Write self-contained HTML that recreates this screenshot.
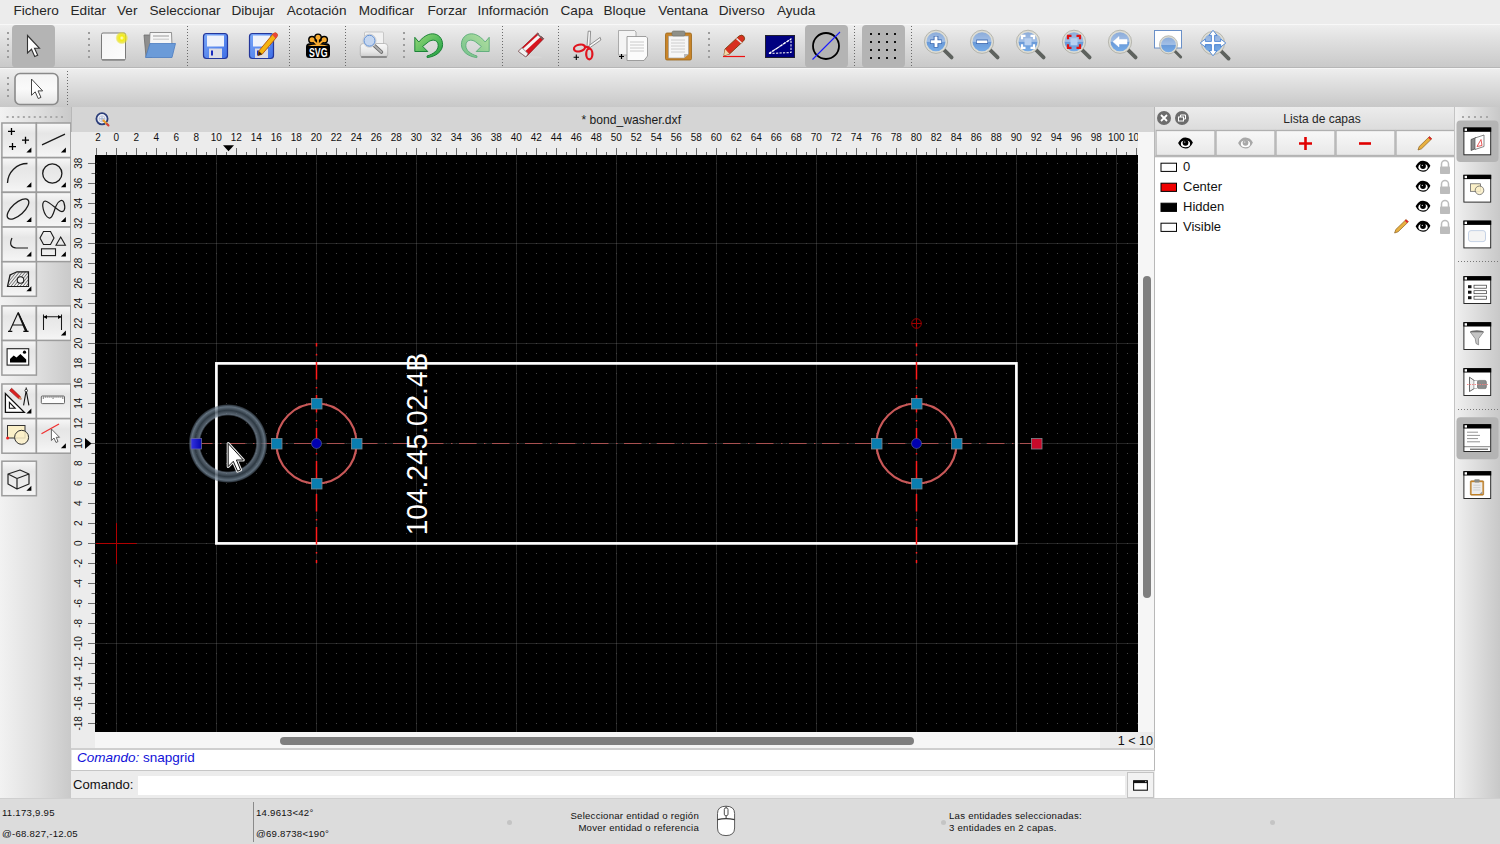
<!DOCTYPE html><html><head><meta charset="utf-8"><style>
*{margin:0;padding:0;box-sizing:border-box}
html,body{width:1500px;height:844px;overflow:hidden;background:#e8e8e8;font-family:"Liberation Sans",sans-serif;color:#000}
.a{position:absolute}
svg{position:absolute;overflow:visible}
#menubar{left:0;top:0;width:1500px;height:24px;background:#ececec}
#menubar span{position:absolute;top:3px;font-size:13.6px;color:#262626;line-height:16px}
#tb1{left:0;top:24px;width:1500px;height:44px;background:linear-gradient(#eeeeee,#e2e2e2 30%,#c9c9c9);border-top:1px solid #f8f8f8;border-bottom:1px solid #b6b6b6}
#tb2{left:0;top:68px;width:1500px;height:40px;background:linear-gradient(#eeeeee,#e0e0e0 35%,#c8c8c8);border-top:1px solid #f6f6f6;border-bottom:1px solid #b4b4b4}
#palette{left:0;top:107px;width:71px;height:691px;background:linear-gradient(90deg,#f2f2f2,#dedede 55%,#c9c9c9)}
#mdititle{left:71px;top:107px;width:1084px;height:25px;background:#d5d5d5}
#rulertop{left:71px;top:132px;width:1067px;height:23px;background:#ececec}
#rulerleft{left:71px;top:155px;width:24px;height:593px;background:#ececec}
#canvas{left:95px;top:155px;width:1043px;height:577px;background:#000;overflow:hidden}
#vscroll{left:1138px;top:132px;width:16px;height:616px;background:#f6f6f6}
#hscroll{left:95px;top:732px;width:1059px;height:16px;background:#f6f6f6}
#cmdhist{left:71px;top:748px;width:1084px;height:23px;background:#fff;border-top:2px solid #d0d0d0;border-bottom:1px solid #c8c8c8}
#cmdrow{left:71px;top:771px;width:1084px;height:27px;background:#ececec}
#status{left:0;top:798px;width:1500px;height:46px;background:#dcdcdc}
#dock{left:1155px;top:107px;width:300px;height:691px;background:#fff}
#rtb{left:1455px;top:107px;width:45px;height:691px;background:linear-gradient(90deg,#f0f0f0,#dadada 55%,#c8c8c8)}
.pb{position:absolute;width:36px;height:36px;border:2px solid #a2a2a2;background:linear-gradient(#f6f6f6,#e6e6e6 30%,#ececec 60%,#f4f4f4)}
.sep{position:absolute;width:1px;border-left:2px dotted #8a8a8a}
</style></head><body>
<div id="menubar" class="a"><span style="left:13.5px">Fichero</span><span style="left:70.5px">Editar</span><span style="left:117px">Ver</span><span style="left:149.5px">Seleccionar</span><span style="left:231.5px">Dibujar</span><span style="left:286.8px">Acotación</span><span style="left:358.8px">Modificar</span><span style="left:427.5px">Forzar</span><span style="left:477.5px">Información</span><span style="left:560.5px">Capa</span><span style="left:603.5px">Bloque</span><span style="left:658.2px">Ventana</span><span style="left:718.8px">Diverso</span><span style="left:777px">Ayuda</span></div>
<div id="tb1" class="a"></div><div id="tb2" class="a"></div>
<svg class="a" style="left:0;top:0" width="1500" height="110" viewBox="0 0 1500 110">
<defs>
<radialGradient id="glow" cx="50%" cy="50%" r="50%"><stop offset="0" stop-color="#ffffe8"/><stop offset="0.35" stop-color="#f4ee10"/><stop offset="0.75" stop-color="#e8e020" stop-opacity="0.7"/><stop offset="1" stop-color="#e8e020" stop-opacity="0"/></radialGradient>
<linearGradient id="paper" x1="0" y1="0" x2="1" y2="1"><stop offset="0" stop-color="#f4f4f4"/><stop offset="1" stop-color="#fdfdfd"/></linearGradient>
<linearGradient id="lens" x1="0" y1="0" x2="0" y2="1"><stop offset="0" stop-color="#8aaad8"/><stop offset="0.48" stop-color="#a2bfe6"/><stop offset="0.52" stop-color="#6a9ad8"/><stop offset="1" stop-color="#78aeea"/></linearGradient>
<linearGradient id="grn" x1="0" y1="0" x2="0" y2="1"><stop offset="0" stop-color="#6fd06a"/><stop offset="1" stop-color="#1e9a36"/></linearGradient>
<linearGradient id="flop" x1="0" y1="0" x2="1" y2="1"><stop offset="0" stop-color="#7aa8f8"/><stop offset="1" stop-color="#3e6ee6"/></linearGradient>
</defs>
<rect x="12" y="25" width="43" height="42.5" rx="4" fill="#b4b4b4"/>
<rect x="805" y="25" width="43" height="42.5" rx="4" fill="#b4b4b4"/>
<rect x="862" y="25" width="43" height="42.5" rx="4" fill="#b4b4b4"/>
<rect x="7" y="32" width="2" height="2" fill="#9c9c9c"/><rect x="7" y="38" width="2" height="2" fill="#9c9c9c"/><rect x="7" y="44" width="2" height="2" fill="#9c9c9c"/><rect x="7" y="50" width="2" height="2" fill="#9c9c9c"/><rect x="7" y="56" width="2" height="2" fill="#9c9c9c"/>
<rect x="88" y="32" width="2" height="2" fill="#9c9c9c"/><rect x="88" y="38" width="2" height="2" fill="#9c9c9c"/><rect x="88" y="44" width="2" height="2" fill="#9c9c9c"/><rect x="88" y="50" width="2" height="2" fill="#9c9c9c"/><rect x="88" y="56" width="2" height="2" fill="#9c9c9c"/>
<rect x="403" y="32" width="2" height="2" fill="#9c9c9c"/><rect x="403" y="38" width="2" height="2" fill="#9c9c9c"/><rect x="403" y="44" width="2" height="2" fill="#9c9c9c"/><rect x="403" y="50" width="2" height="2" fill="#9c9c9c"/><rect x="403" y="56" width="2" height="2" fill="#9c9c9c"/>
<rect x="708" y="32" width="2" height="2" fill="#9c9c9c"/><rect x="708" y="38" width="2" height="2" fill="#9c9c9c"/><rect x="708" y="44" width="2" height="2" fill="#9c9c9c"/><rect x="708" y="50" width="2" height="2" fill="#9c9c9c"/><rect x="708" y="56" width="2" height="2" fill="#9c9c9c"/>
<line x1="187.5" y1="26" x2="187.5" y2="67" stroke="#6a6a6a" stroke-width="1" stroke-dasharray="1 2"/>
<line x1="289.5" y1="26" x2="289.5" y2="67" stroke="#6a6a6a" stroke-width="1" stroke-dasharray="1 2"/>
<line x1="345.5" y1="26" x2="345.5" y2="67" stroke="#6a6a6a" stroke-width="1" stroke-dasharray="1 2"/>
<line x1="502.5" y1="26" x2="502.5" y2="67" stroke="#6a6a6a" stroke-width="1" stroke-dasharray="1 2"/>
<line x1="558.5" y1="26" x2="558.5" y2="67" stroke="#6a6a6a" stroke-width="1" stroke-dasharray="1 2"/>
<line x1="854.5" y1="26" x2="854.5" y2="67" stroke="#6a6a6a" stroke-width="1" stroke-dasharray="1 2"/>
<line x1="911.5" y1="26" x2="911.5" y2="67" stroke="#6a6a6a" stroke-width="1" stroke-dasharray="1 2"/>
<path d="M27.50,35.50 L27.50,53.00 L31.50,49.30 L34.70,56.50 L37.70,55.30 L34.50,48.30 L39.50,48.30Z" fill="#fff" stroke="#333" stroke-width="1.1" stroke-linejoin="miter"/>
<rect x="101.5" y="33" width="24" height="27" rx="1.5" fill="url(#paper)" stroke="#7a7a7a" stroke-width="1"/>
<rect x="102" y="59" width="23" height="1.5" fill="#8a8a8a"/>
<circle cx="121.8" cy="38" r="6.5" fill="url(#glow)"/>
<path d="M144,35 L152,35 L152,57 L146,57 Z" fill="#8e8e8e" stroke="#6c6c6c" stroke-width="0.8"/>
<path d="M150,32.5 L171.5,32.5 L172,46 L149,57 Z" fill="#f6f6f6" stroke="#7a7a7a" stroke-width="0.8"/>
<rect x="153" y="35" width="16" height="2" fill="#c8c8c8"/><rect x="153" y="38.5" width="16" height="1.5" fill="#d4d4d4"/>
<path d="M150,43.5 L175.5,43.5 L172,57.5 L145.5,57.5 Z" fill="#6b9bd8" stroke="#4b7cc0" stroke-width="0.8"/>
<rect x="203.5" y="33.5" width="24" height="25" rx="3" fill="url(#flop)" stroke="#23369a" stroke-width="1.2"/><rect x="207" y="35.5" width="17" height="11" fill="#eef2fb"/><rect x="209" y="48.5" width="13" height="9.5" fill="#dcdce4"/><rect x="211" y="50.5" width="2" height="5" fill="#1a2cc0"/>
<rect x="249.5" y="33.5" width="24" height="25" rx="3" fill="url(#flop)" stroke="#23369a" stroke-width="1.2"/><rect x="253" y="35.5" width="17" height="11" fill="#eef2fb"/><rect x="255" y="48.5" width="13" height="9.5" fill="#dcdce4"/><rect x="257" y="50.5" width="2" height="5" fill="#1a2cc0"/>
<path d="M258.8,51 L273.3,33.6 Q275.5,32 277,33.6 Q278.3,35.5 276.6,37.3 L262.2,54.2 L258.2,55.5 Z" fill="#f4b410" stroke="#b8520c" stroke-width="0.9"/>
<path d="M272.3,34.8 L273.3,33.6 Q275.5,32 277,33.6 Q278.3,35.5 276.6,37.3 L275.6,38.4 Z" fill="#e8463a"/>
<path d="M258.8,51 L262.2,54.2 L258.2,55.5 Z" fill="#3a2a10"/>
<rect x="306" y="43.3" width="24" height="14.7" rx="3.5" fill="#000"/>
<line x1="318" y1="45" x2="312" y2="39.7" stroke="#000" stroke-width="4.2" stroke-linecap="round"/><circle cx="312" cy="39.7" r="3.9" fill="#000"/>
<line x1="318" y1="45" x2="318" y2="37.3" stroke="#000" stroke-width="4.2" stroke-linecap="round"/><circle cx="318" cy="37.3" r="3.9" fill="#000"/>
<line x1="318" y1="45" x2="324.2" y2="39.7" stroke="#000" stroke-width="4.2" stroke-linecap="round"/><circle cx="324.2" cy="39.7" r="3.9" fill="#000"/>
<line x1="318" y1="45" x2="312" y2="39.7" stroke="#f8ac30" stroke-width="1.8"/><circle cx="312" cy="39.7" r="2.5" fill="#f8ac30"/>
<line x1="318" y1="45" x2="318" y2="37.3" stroke="#f8ac30" stroke-width="1.8"/><circle cx="318" cy="37.3" r="2.5" fill="#f8ac30"/>
<line x1="318" y1="45" x2="324.2" y2="39.7" stroke="#f8ac30" stroke-width="1.8"/><circle cx="324.2" cy="39.7" r="2.5" fill="#f8ac30"/>
<path d="M307.8,46 Q312,44 318,44.5 Q324,44 328.4,46 Z" fill="#f8ac30"/>
<text x="318.2" y="57" text-anchor="middle" font-family="Liberation Sans" font-weight="bold" font-size="13.5" fill="#fff" textLength="18.5" lengthAdjust="spacingAndGlyphs">SVG</text>
<defs><linearGradient id="prn" x1="0" y1="0" x2="0" y2="1"><stop offset="0" stop-color="#fafafa"/><stop offset="0.6" stop-color="#e6e6e6"/><stop offset="1" stop-color="#c8c8c8"/></linearGradient></defs>
<rect x="364.5" y="32" width="19" height="13.5" rx="1" fill="#f2f2f2" stroke="#b8b8b8" stroke-width="0.7"/>
<rect x="360.3" y="43.5" width="27.4" height="14" rx="3" fill="url(#prn)" stroke="#a8a8a8" stroke-width="0.7"/>
<rect x="361" y="56" width="26" height="2" rx="1" fill="#8a8a8a"/>
<line x1="374.4" y1="45.7" x2="381.4" y2="52" stroke="#6a6a6a" stroke-width="3.6" stroke-linecap="round"/>
<line x1="374.4" y1="45.7" x2="381.4" y2="52" stroke="#b0b0b0" stroke-width="1.8" stroke-linecap="round"/>
<circle cx="369.5" cy="40.7" r="6.6" fill="#f6f6f6" stroke="#c8c8c8" stroke-width="0.8"/>
<circle cx="369.5" cy="40.7" r="5.5" fill="#c4d6f0" stroke="#5a8ad0" stroke-width="1"/>
<defs><linearGradient id="grn2" x1="0" y1="0" x2="1" y2="1"><stop offset="0" stop-color="#9ad878"/><stop offset="0.6" stop-color="#4cb85a"/><stop offset="1" stop-color="#1e9a3a"/></linearGradient><linearGradient id="grn3" x1="1" y1="0" x2="0" y2="1"><stop offset="0" stop-color="#b4e0a0"/><stop offset="1" stop-color="#72c08a"/></linearGradient></defs>
<path d="M414.8,37.3 L418.8,42 C422.5,37.5 427.5,33.8 432.5,33.8 C438.5,33.8 442.6,38.5 442.6,44.5 C442.6,51.5 436,56.5 427.2,57.6 L427,56 C433.5,54 438.2,50.5 438.2,45.5 C438.2,42 436,40.2 433.5,40.2 C431.5,40.2 430,40.8 428.5,41.8 L422.7,46.4 L427.8,51.5 L414.8,51.5 Z" fill="url(#grn2)" stroke="#0e7a2c" stroke-width="0.9" stroke-linejoin="round"/>
<path d="M 489.2,37.3 L 485.2,42 C 481.5,37.5 476.5,33.8 471.5,33.8 C 465.5,33.8 461.4,38.5 461.4,44.5 C 461.4,51.5 468.0,56.5 476.8,57.6 L 477.0,56 C 470.5,54 465.8,50.5 465.8,45.5 C 465.8,42 468.0,40.2 470.5,40.2 C 472.5,40.2 474.0,40.8 475.5,41.8 L 481.3,46.4 L 476.2,51.5 L 489.2,51.5 Z" fill="url(#grn3)" stroke="#5aaa78" stroke-width="0.9" stroke-linejoin="round"/>
<ellipse cx="531" cy="57.2" rx="11" ry="1.5" fill="#d6d6d6"/>
<path d="M518.3,51.3 L537.7,33 L543.7,38.7 L526,57 Z" fill="#d8141e" stroke="#8a1016" stroke-width="0.7" stroke-linejoin="round"/>
<path d="M522.5,49.3 L539.5,33.8 L541.6,36 L524.6,51.7 Z" fill="#f4f4f4"/>
<path d="M537.7,33 L543.7,38.7 L542.6,39.8 L536.6,34.1 Z" fill="#6a6a6a"/>
<path d="M518.3,51.3 L522,47.8 L528,53.6 L526,57 Z" fill="#f2f2f2" stroke="#7a7a7a" stroke-width="0.7"/>
<path d="M587,46.5 L588.2,31.2 L590.6,31.2 L589.8,46.5 Z" fill="#f6f6f6" stroke="#6a6a6a" stroke-width="0.7"/>
<path d="M588.6,45.8 L600.2,37.4 L600.9,40 L590,47.6 Z" fill="#f6f6f6" stroke="#6a6a6a" stroke-width="0.7"/>
<ellipse cx="579.5" cy="48" rx="5.6" ry="3.3" transform="rotate(-12 579.5 48)" fill="none" stroke="#e0141e" stroke-width="2.2"/>
<ellipse cx="589.3" cy="54" rx="3.1" ry="5.3" fill="none" stroke="#e0141e" stroke-width="2.2"/>
<path d="M584.6,46.6 L588.5,47.4 L589.3,49" stroke="#e0141e" stroke-width="2.2" fill="none"/>
<path d="M573.6,57.3 h5.4 M576.3,54.6 v5.4" stroke="#000" stroke-width="1.1"/>
<path d="M618.5,30.5 L634.5,30.5 L636,32 L636,55 L618.5,55 Z" fill="#f4f4f4" stroke="#9a9a9a" stroke-width="0.8"/>
<path d="M627,36.5 L646,36.5 L647.5,38 L647.5,56 L644,60.5 L627,60.5 Z" fill="#fbfbfb" stroke="#8a8a8a" stroke-width="0.8"/>
<line x1="630" y1="42" x2="644" y2="42" stroke="#c4c4c4" stroke-width="0.9"/>
<line x1="630" y1="45" x2="644" y2="45" stroke="#c4c4c4" stroke-width="0.9"/>
<line x1="630" y1="48" x2="644" y2="48" stroke="#c4c4c4" stroke-width="0.9"/>
<line x1="630" y1="51" x2="644" y2="51" stroke="#c4c4c4" stroke-width="0.9"/>
<path d="M619,56.5 h5 M621.5,54 v5" stroke="#000" stroke-width="1.2"/>
<rect x="665.5" y="33" width="26" height="27" rx="1.5" fill="#c88428" stroke="#9a6416" stroke-width="0.8"/>
<path d="M668.5,36 L688.5,36 L688.5,54 L684,58 L668.5,58 Z" fill="#f6f6f6" stroke="#9a9a9a" stroke-width="0.6"/>
<path d="M684,58 L688.5,54 L684,54 Z" fill="#b8b8b8"/>
<rect x="672" y="31" width="13" height="5" rx="1.5" fill="#8f9088" stroke="#6f706a" stroke-width="0.6"/>
<line x1="671" y1="40" x2="685" y2="40" stroke="#c8c8c8" stroke-width="0.9"/>
<line x1="671" y1="43" x2="685" y2="43" stroke="#c8c8c8" stroke-width="0.9"/>
<line x1="671" y1="46" x2="685" y2="46" stroke="#c8c8c8" stroke-width="0.9"/>
<line x1="671" y1="49" x2="685" y2="49" stroke="#c8c8c8" stroke-width="0.9"/>
<line x1="671" y1="52" x2="685" y2="52" stroke="#c8c8c8" stroke-width="0.9"/>
<line x1="723" y1="56.5" x2="745" y2="56.5" stroke="#ee1010" stroke-width="1.2"/>
<path d="M725,49 L739,36 Q742,34 744,36.5 Q745.5,39 743.5,41 L729.5,54 L724,55.5 Z" fill="#d83020" stroke="#7a4010" stroke-width="0.9"/>
<path d="M725,49 L729.5,54 L724,55.5 Z" fill="#f0d8a8"/>
<path d="M736.5,38.5 L741.5,43" stroke="#e8e8e8" stroke-width="1.6"/>
<rect x="765.5" y="35.5" width="29" height="22" fill="#000080" stroke="#202030" stroke-width="1"/>
<path d="M769,53.5 L791,52.5 L791,39 Z" fill="none" stroke="#e8e8f0" stroke-width="1.1" stroke-dasharray="2.2 1.3"/>
<path d="M769,53.5 L791,39" stroke="#ffffff" stroke-width="1.2" stroke-dasharray="3 1.2"/>
<circle cx="826" cy="46" r="13" fill="none" stroke="#000" stroke-width="1.8"/>
<line x1="812.5" y1="59.5" x2="840" y2="32" stroke="#1a1aff" stroke-width="1.1"/>
<rect x="870" y="33" width="2" height="2" fill="#111"/>
<rect x="870" y="41" width="2" height="2" fill="#111"/>
<rect x="870" y="49" width="2" height="2" fill="#111"/>
<rect x="870" y="57" width="2" height="2" fill="#111"/>
<rect x="878" y="33" width="2" height="2" fill="#111"/>
<rect x="878" y="41" width="2" height="2" fill="#111"/>
<rect x="878" y="49" width="2" height="2" fill="#111"/>
<rect x="878" y="57" width="2" height="2" fill="#111"/>
<rect x="886" y="33" width="2" height="2" fill="#111"/>
<rect x="886" y="41" width="2" height="2" fill="#111"/>
<rect x="886" y="49" width="2" height="2" fill="#111"/>
<rect x="886" y="57" width="2" height="2" fill="#111"/>
<rect x="894" y="33" width="2" height="2" fill="#111"/>
<rect x="894" y="41" width="2" height="2" fill="#111"/>
<rect x="894" y="49" width="2" height="2" fill="#111"/>
<rect x="894" y="57" width="2" height="2" fill="#111"/>
<line x1="944.0" y1="49.8" x2="951.6" y2="57.4" stroke="#5e625e" stroke-width="3.80" stroke-linecap="round"/><circle cx="936" cy="41.8" r="10.5" fill="url(#lens)" stroke="#dcdcd4" stroke-width="2.00"/><circle cx="936" cy="41.8" r="11.60" fill="none" stroke="#9a9a90" stroke-width="0.6"/><path d="M930.2,41.8 h11.6 M936,36 v11.6" stroke="#2a5aa8" stroke-width="4.6"/><path d="M930.7,41.8 h10.6 M936,36.5 v10.6" stroke="#fff" stroke-width="3"/>
<line x1="990.0" y1="49.8" x2="997.6" y2="57.4" stroke="#5e625e" stroke-width="3.80" stroke-linecap="round"/><circle cx="982" cy="41.8" r="10.5" fill="url(#lens)" stroke="#dcdcd4" stroke-width="2.00"/><circle cx="982" cy="41.8" r="11.60" fill="none" stroke="#9a9a90" stroke-width="0.6"/><path d="M976.3,41.8 h11.6" stroke="#2a5aa8" stroke-width="4.4"/><path d="M976.8,41.8 h10.6" stroke="#fff" stroke-width="2.8"/>
<line x1="1036.0" y1="49.8" x2="1043.6" y2="57.4" stroke="#5e625e" stroke-width="3.80" stroke-linecap="round"/><circle cx="1028" cy="41.8" r="10.5" fill="url(#lens)" stroke="#dcdcd4" stroke-width="2.00"/><circle cx="1028" cy="41.8" r="11.60" fill="none" stroke="#9a9a90" stroke-width="0.6"/><rect x="1024.5" y="38.3" width="7" height="7" fill="#b8d0f0"/><path d="M1022,39.3 v-3.5 h3.5 M1030.5,35.8 h3.5 v3.5 M1034,44.3 v3.5 h-3.5 M1025.5,47.8 h-3.5 v-3.5" fill="none" stroke="#fff" stroke-width="2.2"/>
<line x1="1082.0" y1="49.8" x2="1089.6" y2="57.4" stroke="#5e625e" stroke-width="3.80" stroke-linecap="round"/><circle cx="1074" cy="41.8" r="10.5" fill="url(#lens)" stroke="#dcdcd4" stroke-width="2.00"/><circle cx="1074" cy="41.8" r="11.60" fill="none" stroke="#9a9a90" stroke-width="0.6"/><rect x="1070.5" y="38.3" width="7" height="7" fill="#b8d0f0"/><path d="M1068,39.3 v-3.5 h3.5 M1076.5,35.8 h3.5 v3.5 M1080,44.3 v3.5 h-3.5 M1071.5,47.8 h-3.5 v-3.5" fill="none" stroke="#e01010" stroke-width="2.2"/>
<line x1="1128.0" y1="49.8" x2="1135.6" y2="57.4" stroke="#5e625e" stroke-width="3.80" stroke-linecap="round"/><circle cx="1120" cy="41.8" r="10.5" fill="url(#lens)" stroke="#dcdcd4" stroke-width="2.00"/><circle cx="1120" cy="41.8" r="11.60" fill="none" stroke="#9a9a90" stroke-width="0.6"/><path d="M1113,41.8 L1119,36.5 L1119,39.5 L1127,39.5 L1127,44 L1119,44 L1119,47 Z" fill="#fff" stroke="#fff" stroke-width="0.5"/>
<rect x="1154.5" y="30.5" width="27" height="17.5" fill="#fff" stroke="#6a90c8" stroke-width="1"/>
<line x1="1174.747619047619" y1="51.047619047619044" x2="1180.682857142857" y2="56.98285714285714" stroke="#5e625e" stroke-width="2.97" stroke-linecap="round"/><circle cx="1168.5" cy="44.8" r="8.2" fill="url(#lens)" stroke="#dcdcd4" stroke-width="1.56"/><circle cx="1168.5" cy="44.8" r="9.06" fill="none" stroke="#9a9a90" stroke-width="0.6"/>
<line x1="1221.0" y1="51.0" x2="1228.6" y2="58.6" stroke="#5e625e" stroke-width="3.80" stroke-linecap="round"/><circle cx="1213" cy="43" r="10.5" fill="url(#lens)" stroke="#dcdcd4" stroke-width="2.00"/><circle cx="1213" cy="43" r="11.60" fill="none" stroke="#9a9a90" stroke-width="0.6"/><path d="M1213,30.3 L1217,35.3 L1214.6,35.3 L1214.6,41.4 L1220.7,41.4 L1220.7,39 L1225.8,43 L1220.7,47 L1220.7,44.6 L1214.6,44.6 L1214.6,50.7 L1217,50.7 L1213,55.8 L1209,50.7 L1211.4,50.7 L1211.4,44.6 L1205.3,44.6 L1205.3,47 L1200.2,43 L1205.3,39 L1205.3,41.4 L1211.4,41.4 L1211.4,35.3 L1209,35.3 Z" fill="#fff" stroke="#3a78d0" stroke-width="0.8" stroke-linejoin="round"/>
<rect x="7" y="77" width="2" height="2" fill="#9c9c9c"/><rect x="7" y="83" width="2" height="2" fill="#9c9c9c"/><rect x="7" y="89" width="2" height="2" fill="#9c9c9c"/><rect x="7" y="95" width="2" height="2" fill="#9c9c9c"/>
<defs><linearGradient id="btn2" x1="0" y1="0" x2="0" y2="1"><stop offset="0" stop-color="#f4f4f4"/><stop offset="0.5" stop-color="#fafafa"/><stop offset="1" stop-color="#e4e4e4"/></linearGradient></defs>
<rect x="15" y="73.5" width="43" height="31" rx="5" fill="url(#btn2)" stroke="#8a8a8a" stroke-width="1.6"/>
<path d="M31.50,79.00 L31.50,95.28 L35.22,91.83 L38.20,98.53 L40.99,97.41 L38.01,90.90 L42.66,90.90Z" fill="#fff" stroke="#444" stroke-width="1.0" stroke-linejoin="miter"/>
<line x1="67.5" y1="71" x2="67.5" y2="105" stroke="#6a6a6a" stroke-width="1" stroke-dasharray="1 2"/>
</svg>
<div id="palette" class="a"></div>
<svg class="a" style="left:0;top:0" width="72" height="800" viewBox="0 0 72 800">
<defs><linearGradient id="pbg" x1="0" y1="0" x2="0" y2="1"><stop offset="0" stop-color="#f8f8f8"/><stop offset="0.3" stop-color="#e6e6e6"/><stop offset="0.65" stop-color="#ececec"/><stop offset="1" stop-color="#f6f6f6"/></linearGradient></defs>
<rect x="6.5" y="116" width="2" height="2" fill="#a8a8a8"/>
<rect x="11.95" y="116" width="2" height="2" fill="#a8a8a8"/>
<rect x="17.4" y="116" width="2" height="2" fill="#a8a8a8"/>
<rect x="22.85" y="116" width="2" height="2" fill="#a8a8a8"/>
<rect x="28.3" y="116" width="2" height="2" fill="#a8a8a8"/>
<rect x="33.75" y="116" width="2" height="2" fill="#a8a8a8"/>
<rect x="39.2" y="116" width="2" height="2" fill="#a8a8a8"/>
<rect x="44.65" y="116" width="2" height="2" fill="#a8a8a8"/>
<rect x="50.1" y="116" width="2" height="2" fill="#a8a8a8"/>
<rect x="55.550000000000004" y="116" width="2" height="2" fill="#a8a8a8"/>
<rect x="61.0" y="116" width="2" height="2" fill="#a8a8a8"/>
<rect x="1.9" y="123" width="34.5" height="34.5" fill="url(#pbg)" stroke="#9c9c9c" stroke-width="1.5"/>
<rect x="36.4" y="123" width="34.5" height="34.5" fill="url(#pbg)" stroke="#9c9c9c" stroke-width="1.5"/>
<rect x="1.9" y="157.7" width="34.5" height="34.5" fill="url(#pbg)" stroke="#9c9c9c" stroke-width="1.5"/>
<rect x="36.4" y="157.7" width="34.5" height="34.5" fill="url(#pbg)" stroke="#9c9c9c" stroke-width="1.5"/>
<rect x="1.9" y="192.4" width="34.5" height="34.5" fill="url(#pbg)" stroke="#9c9c9c" stroke-width="1.5"/>
<rect x="36.4" y="192.4" width="34.5" height="34.5" fill="url(#pbg)" stroke="#9c9c9c" stroke-width="1.5"/>
<rect x="1.9" y="227.1" width="34.5" height="34.5" fill="url(#pbg)" stroke="#9c9c9c" stroke-width="1.5"/>
<rect x="36.4" y="227.1" width="34.5" height="34.5" fill="url(#pbg)" stroke="#9c9c9c" stroke-width="1.5"/>
<rect x="1.9" y="261.8" width="34.5" height="34.5" fill="url(#pbg)" stroke="#9c9c9c" stroke-width="1.5"/>
<rect x="1.9" y="305.9" width="34.5" height="34.5" fill="url(#pbg)" stroke="#9c9c9c" stroke-width="1.5"/>
<rect x="1.9" y="340.6" width="34.5" height="34.5" fill="url(#pbg)" stroke="#9c9c9c" stroke-width="1.5"/>
<rect x="36.4" y="305.9" width="34.5" height="34.5" fill="url(#pbg)" stroke="#9c9c9c" stroke-width="1.5"/>
<rect x="1.9" y="384" width="34.5" height="34.5" fill="url(#pbg)" stroke="#9c9c9c" stroke-width="1.5"/>
<rect x="36.4" y="384" width="34.5" height="34.5" fill="url(#pbg)" stroke="#9c9c9c" stroke-width="1.5"/>
<rect x="1.9" y="418.7" width="34.5" height="34.5" fill="url(#pbg)" stroke="#9c9c9c" stroke-width="1.5"/>
<rect x="36.4" y="418.7" width="34.5" height="34.5" fill="url(#pbg)" stroke="#9c9c9c" stroke-width="1.5"/>
<rect x="1.9" y="461.2" width="34.5" height="34.5" fill="url(#pbg)" stroke="#9c9c9c" stroke-width="1.5"/>
<path d="M8,131.4 h7 M11.5,128 v7 M22,140.2 h7 M25.5,136.7 v7 M9,146.6 h7 M12.5,143.1 v7" stroke="#000" stroke-width="1.3"/>
<path d="M26.4,152.5 L31.4,152.5 L31.4,147.5 Z" fill="#000"/>
<line x1="42" y1="144.8" x2="65" y2="134.2" stroke="#1a1a1a" fill="none" stroke-width="1.3"/>
<path d="M60.9,152.5 L65.9,152.5 L65.9,147.5 Z" fill="#000"/>
<path d="M7.5,183 A20,20 0 0 1 27.5,163.5" stroke="#1a1a1a" fill="none" stroke-width="1.3"/>
<path d="M26.4,187.2 L31.4,187.2 L31.4,182.2 Z" fill="#000"/>
<circle cx="52.3" cy="173.5" r="9.6" stroke="#1a1a1a" fill="none" stroke-width="1.3"/>
<path d="M60.9,187.2 L65.9,187.2 L65.9,182.2 Z" fill="#000"/>
<ellipse cx="18" cy="209" rx="13.5" ry="6" transform="rotate(-42 18 209)" stroke="#1a1a1a" fill="none" stroke-width="1.3"/>
<path d="M26.4,221.9 L31.4,221.9 L31.4,216.9 Z" fill="#000"/>
<path d="M45,201 C40,202 44,216 49,218 C53,219 54,210 56,206 C58,201 63,198 64,203 C66,209 64,213 60,211 C56,209 50,202 45,201 Z" stroke="#1a1a1a" fill="none" stroke-width="1.2"/>
<path d="M60.9,221.9 L65.9,221.9 L65.9,216.9 Z" fill="#000"/>
<path d="M12,238 Q8,247 16,248 L28,248" stroke="#1a1a1a" fill="none" stroke-width="1.2"/>
<path d="M26.4,256.6 L31.4,256.6 L31.4,251.6 Z" fill="#000"/>
<path d="M43.5,231.5 L50.5,231.5 L54,238 L50.5,244.5 L43.5,244.5 L40,238 Z" stroke="#1a1a1a" fill="none" stroke-width="1.1"/>
<path d="M56,245.3 L65.4,245.3 L60.7,237 Z" stroke="#1a1a1a" fill="none" stroke-width="1.1"/>
<rect x="41.5" y="248.8" width="14" height="6.8" stroke="#1a1a1a" fill="none" stroke-width="1.1"/>
<path d="M60.9,256.6 L65.9,256.6 L65.9,251.6 Z" fill="#000"/>
<clipPath id="hc"><path d="M7.5,286.5 L10,275 L17,271.8 L28.5,271.8 L28.5,286.5 Z"/></clipPath>
<g clip-path="url(#hc)"><line x1="-4" y1="290" x2="12" y2="270" stroke="#555" stroke-width="0.8"/><line x1="-1" y1="290" x2="15" y2="270" stroke="#555" stroke-width="0.8"/><line x1="2" y1="290" x2="18" y2="270" stroke="#555" stroke-width="0.8"/><line x1="5" y1="290" x2="21" y2="270" stroke="#555" stroke-width="0.8"/><line x1="8" y1="290" x2="24" y2="270" stroke="#555" stroke-width="0.8"/><line x1="11" y1="290" x2="27" y2="270" stroke="#555" stroke-width="0.8"/><line x1="14" y1="290" x2="30" y2="270" stroke="#555" stroke-width="0.8"/><line x1="17" y1="290" x2="33" y2="270" stroke="#555" stroke-width="0.8"/><line x1="20" y1="290" x2="36" y2="270" stroke="#555" stroke-width="0.8"/><line x1="23" y1="290" x2="39" y2="270" stroke="#555" stroke-width="0.8"/><line x1="26" y1="290" x2="42" y2="270" stroke="#555" stroke-width="0.8"/><line x1="29" y1="290" x2="45" y2="270" stroke="#555" stroke-width="0.8"/></g>
<path d="M7.5,286.5 L10,275 L17,271.8 L28.5,271.8 L28.5,286.5 Z" stroke="#1a1a1a" fill="none" stroke-width="1.2"/>
<circle cx="20.5" cy="280" r="3.3" fill="#f0f0f0" stroke="#1a1a1a" stroke-width="1.1"/>
<path d="M26.4,291.3 L31.4,291.3 L31.4,286.3 Z" fill="#000"/>
<path d="M9.6,331.3 L18.2,312.6 M18.2,312.6 L26.8,331.3 M12.4,325 H23.8 M8,331.4 H12.3 M23.3,331.4 H28.6" stroke="#111" stroke-width="1.1" fill="none"/>
<path d="M17.6,313.6 L18.6,312.3 L27.6,331.3 L25,331.3 Z" fill="#111"/>
<path d="M43.5,314.5 v15.5 M61.5,314.5 v15.5 M43.5,316.8 h18" stroke="#1a1a1a" fill="none" stroke-width="1.05"/>
<path d="M43.5,317 l3.5,-2 v4 Z M61.5,317 l-3.5,-2 v4 Z" fill="#000"/>
<path d="M60.9,335.4 L65.9,335.4 L65.9,330.4 Z" fill="#000"/>
<rect x="7.1" y="348.7" width="21.6" height="16.4" fill="#fff" stroke="#222" stroke-width="1.1"/>
<path d="M10,362.6 L10,359 L13.7,355.4 L16.5,357.5 L20.4,354 L26.2,359.5 L26.2,362.6 Z" fill="#000"/>
<circle cx="24.5" cy="352.2" r="1.6" fill="#000"/>
<path d="M5.4,412.3 L5.4,393.5 L24.3,412.3 Z" fill="#fff" stroke="#111" stroke-width="1.3" stroke-linejoin="miter"/>
<path d="M9.4,408.3 L9.4,402.3 L15.2,408.3 Z" fill="none" stroke="#111" stroke-width="1.1"/>
<path d="M9.6,390.6 L11.6,388.2 L20.3,396.6 L21.2,399.2 L18.4,398.6 Z" fill="#dc2020" stroke="#7a1010" stroke-width="0.6"/>
<path d="M18.4,398.6 L20.3,396.6 L21.2,399.2 Z" fill="#d8a060"/>
<path d="M26.2,390.5 L23.6,405.3 M26.2,390.5 L28.9,405.3 M26.2,387.6 V390" stroke="#111" stroke-width="1.1" fill="none"/>
<circle cx="26.2" cy="390.6" r="1.3" fill="#fff" stroke="#111" stroke-width="0.8"/>
<path d="M26.4,413.5 L31.4,413.5 L31.4,408.5 Z" fill="#000"/>
<rect x="41.3" y="396" width="23.2" height="7.6" rx="1" fill="#fcfcfc" stroke="#555" stroke-width="0.9"/>
<path d="M43.30,396.4 v2.6 M45.25,396.4 v1.4 M47.20,396.4 v1.4 M49.15,396.4 v1.4 M51.10,396.4 v1.4 M53.05,396.4 v2.6 M55.00,396.4 v1.4 M56.95,396.4 v1.4 M58.90,396.4 v1.4 M60.85,396.4 v1.4 M62.80,396.4 v2.6 " stroke="#444" stroke-width="0.7"/>
<rect x="7.5" y="425.5" width="17.5" height="12.5" fill="#fbf0c8" stroke="#333" stroke-width="1"/>
<circle cx="21.6" cy="437.3" r="7" fill="#fbf0c8" fill-opacity="0.85" stroke="#333" stroke-width="1"/>
<circle cx="7.6" cy="438" r="1.5" fill="#f02020"/>
<line x1="41.5" y1="433.8" x2="59" y2="424" stroke="#f03030" stroke-width="1.3"/>
<path d="M51.4,429 L51.4,440.5 L54,438 L56,442.5 L58,441.5 L56.2,437.3 L59.5,437.3 Z" fill="#fff" stroke="#555" stroke-width="0.9"/>
<path d="M60.9,448.2 L65.9,448.2 L65.9,443.2 Z" fill="#000"/>
<path d="M8,474 L20,470 L29,474 L29,484 L17,489 L8,484 Z M8,474 L17,478.5 L29,474 M17,478.5 L17,489" fill="none" stroke="#222" stroke-width="1.2" stroke-linejoin="round"/>
<path d="M26.4,490.7 L31.4,490.7 L31.4,485.7 Z" fill="#000"/>
</svg>
<div id="mdititle" class="a"></div>
<div class="a" style="left:71px;top:107px;width:1px;height:641px;background:#b8b8b8"></div>
<div id="rulertop" class="a"></div><div id="rulerleft" class="a"></div>
<div class="a" style="left:581.5px;top:112px;font-size:12.1px;color:#1a1a1a;line-height:16px;white-space:pre">* bond_washer.dxf</div>
<svg class="a" style="left:94px;top:111px" width="18" height="18" viewBox="0 0 18 18"><circle cx="8" cy="7.8" r="5.6" fill="#eef0f6" stroke="#2c3e7a" stroke-width="1.8"/><path d="M5,7.8 h6 M8,4.8 v6" stroke="#9aa8c8" stroke-width="0.9"/><circle cx="8" cy="7.8" r="3" fill="none" stroke="#b8c0d8" stroke-width="0.8"/><path d="M9.5,9.5 L14,14" stroke="#e8a030" stroke-width="2.2" stroke-linecap="round"/><path d="M13,13 L14.5,14.5" stroke="#d04040" stroke-width="2" stroke-linecap="round"/></svg>
<svg class="a" style="left:0;top:0" width="1160" height="750" viewBox="0 0 1160 750">
<defs><clipPath id="rtc"><rect x="95" y="130" width="1043" height="25"/></clipPath><clipPath id="rlc"><rect x="70" y="155" width="25" height="577"/></clipPath></defs>
<g clip-path="url(#rtc)">
<path d="M86.5,152 V155 M96.5,148 V155 M106.5,152 V155 M116.5,148 V155 M126.5,152 V155 M136.5,148 V155 M146.5,152 V155 M156.5,148 V155 M166.5,152 V155 M176.5,148 V155 M186.5,152 V155 M196.5,148 V155 M206.5,152 V155 M216.5,148 V155 M226.5,152 V155 M236.5,148 V155 M246.5,152 V155 M256.5,148 V155 M266.5,152 V155 M276.5,148 V155 M286.5,152 V155 M296.5,148 V155 M306.5,152 V155 M316.5,148 V155 M326.5,152 V155 M336.5,148 V155 M346.5,152 V155 M356.5,148 V155 M366.5,152 V155 M376.5,148 V155 M386.5,152 V155 M396.5,148 V155 M406.5,152 V155 M416.5,148 V155 M426.5,152 V155 M436.5,148 V155 M446.5,152 V155 M456.5,148 V155 M466.5,152 V155 M476.5,148 V155 M486.5,152 V155 M496.5,148 V155 M506.5,152 V155 M516.5,148 V155 M526.5,152 V155 M536.5,148 V155 M546.5,152 V155 M556.5,148 V155 M566.5,152 V155 M576.5,148 V155 M586.5,152 V155 M596.5,148 V155 M606.5,152 V155 M616.5,148 V155 M626.5,152 V155 M636.5,148 V155 M646.5,152 V155 M656.5,148 V155 M666.5,152 V155 M676.5,148 V155 M686.5,152 V155 M696.5,148 V155 M706.5,152 V155 M716.5,148 V155 M726.5,152 V155 M736.5,148 V155 M746.5,152 V155 M756.5,148 V155 M766.5,152 V155 M776.5,148 V155 M786.5,152 V155 M796.5,148 V155 M806.5,152 V155 M816.5,148 V155 M826.5,152 V155 M836.5,148 V155 M846.5,152 V155 M856.5,148 V155 M866.5,152 V155 M876.5,148 V155 M886.5,152 V155 M896.5,148 V155 M906.5,152 V155 M916.5,148 V155 M926.5,152 V155 M936.5,148 V155 M946.5,152 V155 M956.5,148 V155 M966.5,152 V155 M976.5,148 V155 M986.5,152 V155 M996.5,148 V155 M1006.5,152 V155 M1016.5,148 V155 M1026.5,152 V155 M1036.5,148 V155 M1046.5,152 V155 M1056.5,148 V155 M1066.5,152 V155 M1076.5,148 V155 M1086.5,152 V155 M1096.5,148 V155 M1106.5,152 V155 M1116.5,148 V155 M1126.5,152 V155 M1136.5,148 V155 M1146.5,152 V155" stroke="#6c6c6c" stroke-width="1"/>
<g font-family="Liberation Sans" font-size="10" fill="#111" text-anchor="middle"><text x="96.3" y="141.3">-2</text><text x="116.3" y="141.3">0</text><text x="136.3" y="141.3">2</text><text x="156.3" y="141.3">4</text><text x="176.3" y="141.3">6</text><text x="196.3" y="141.3">8</text><text x="216.3" y="141.3">10</text><text x="236.3" y="141.3">12</text><text x="256.3" y="141.3">14</text><text x="276.3" y="141.3">16</text><text x="296.3" y="141.3">18</text><text x="316.3" y="141.3">20</text><text x="336.3" y="141.3">22</text><text x="356.3" y="141.3">24</text><text x="376.3" y="141.3">26</text><text x="396.3" y="141.3">28</text><text x="416.3" y="141.3">30</text><text x="436.3" y="141.3">32</text><text x="456.3" y="141.3">34</text><text x="476.3" y="141.3">36</text><text x="496.3" y="141.3">38</text><text x="516.3" y="141.3">40</text><text x="536.3" y="141.3">42</text><text x="556.3" y="141.3">44</text><text x="576.3" y="141.3">46</text><text x="596.3" y="141.3">48</text><text x="616.3" y="141.3">50</text><text x="636.3" y="141.3">52</text><text x="656.3" y="141.3">54</text><text x="676.3" y="141.3">56</text><text x="696.3" y="141.3">58</text><text x="716.3" y="141.3">60</text><text x="736.3" y="141.3">62</text><text x="756.3" y="141.3">64</text><text x="776.3" y="141.3">66</text><text x="796.3" y="141.3">68</text><text x="816.3" y="141.3">70</text><text x="836.3" y="141.3">72</text><text x="856.3" y="141.3">74</text><text x="876.3" y="141.3">76</text><text x="896.3" y="141.3">78</text><text x="916.3" y="141.3">80</text><text x="936.3" y="141.3">82</text><text x="956.3" y="141.3">84</text><text x="976.3" y="141.3">86</text><text x="996.3" y="141.3">88</text><text x="1016.3" y="141.3">90</text><text x="1036.3" y="141.3">92</text><text x="1056.3" y="141.3">94</text><text x="1076.3" y="141.3">96</text><text x="1096.3" y="141.3">98</text><text x="1116.3" y="141.3">100</text><text x="1136.3" y="141.3">102</text></g>
<path d="M223,145.2 L234,145.2 L228.5,151.2 Z" fill="#000"/>
</g>
<g clip-path="url(#rlc)">
<path d="M88,743.5 H95 M91.5,733.5 H95 M88,723.5 H95 M91.5,713.5 H95 M88,703.5 H95 M91.5,693.5 H95 M88,683.5 H95 M91.5,673.5 H95 M88,663.5 H95 M91.5,653.5 H95 M88,643.5 H95 M91.5,633.5 H95 M88,623.5 H95 M91.5,613.5 H95 M88,603.5 H95 M91.5,593.5 H95 M88,583.5 H95 M91.5,573.5 H95 M88,563.5 H95 M91.5,553.5 H95 M88,543.5 H95 M91.5,533.5 H95 M88,523.5 H95 M91.5,513.5 H95 M88,503.5 H95 M91.5,493.5 H95 M88,483.5 H95 M91.5,473.5 H95 M88,463.5 H95 M91.5,453.5 H95 M88,443.5 H95 M91.5,433.5 H95 M88,423.5 H95 M91.5,413.5 H95 M88,403.5 H95 M91.5,393.5 H95 M88,383.5 H95 M91.5,373.5 H95 M88,363.5 H95 M91.5,353.5 H95 M88,343.5 H95 M91.5,333.5 H95 M88,323.5 H95 M91.5,313.5 H95 M88,303.5 H95 M91.5,293.5 H95 M88,283.5 H95 M91.5,273.5 H95 M88,263.5 H95 M91.5,253.5 H95 M88,243.5 H95 M91.5,233.5 H95 M88,223.5 H95 M91.5,213.5 H95 M88,203.5 H95 M91.5,193.5 H95 M88,183.5 H95 M91.5,173.5 H95 M88,163.5 H95 M91.5,153.5 H95" stroke="#6c6c6c" stroke-width="1"/>
<g font-family="Liberation Sans" font-size="10" fill="#111" text-anchor="middle"><text transform="translate(81.9,723.3) rotate(-90)" x="0" y="0">-18</text><text transform="translate(81.9,703.3) rotate(-90)" x="0" y="0">-16</text><text transform="translate(81.9,683.3) rotate(-90)" x="0" y="0">-14</text><text transform="translate(81.9,663.3) rotate(-90)" x="0" y="0">-12</text><text transform="translate(81.9,643.3) rotate(-90)" x="0" y="0">-10</text><text transform="translate(81.9,623.3) rotate(-90)" x="0" y="0">-8</text><text transform="translate(81.9,603.3) rotate(-90)" x="0" y="0">-6</text><text transform="translate(81.9,583.3) rotate(-90)" x="0" y="0">-4</text><text transform="translate(81.9,563.3) rotate(-90)" x="0" y="0">-2</text><text transform="translate(81.9,543.3) rotate(-90)" x="0" y="0">0</text><text transform="translate(81.9,523.3) rotate(-90)" x="0" y="0">2</text><text transform="translate(81.9,503.3) rotate(-90)" x="0" y="0">4</text><text transform="translate(81.9,483.3) rotate(-90)" x="0" y="0">6</text><text transform="translate(81.9,463.3) rotate(-90)" x="0" y="0">8</text><text transform="translate(81.9,443.3) rotate(-90)" x="0" y="0">10</text><text transform="translate(81.9,423.3) rotate(-90)" x="0" y="0">12</text><text transform="translate(81.9,403.3) rotate(-90)" x="0" y="0">14</text><text transform="translate(81.9,383.3) rotate(-90)" x="0" y="0">16</text><text transform="translate(81.9,363.3) rotate(-90)" x="0" y="0">18</text><text transform="translate(81.9,343.3) rotate(-90)" x="0" y="0">20</text><text transform="translate(81.9,323.3) rotate(-90)" x="0" y="0">22</text><text transform="translate(81.9,303.3) rotate(-90)" x="0" y="0">24</text><text transform="translate(81.9,283.3) rotate(-90)" x="0" y="0">26</text><text transform="translate(81.9,263.3) rotate(-90)" x="0" y="0">28</text><text transform="translate(81.9,243.3) rotate(-90)" x="0" y="0">30</text><text transform="translate(81.9,223.3) rotate(-90)" x="0" y="0">32</text><text transform="translate(81.9,203.3) rotate(-90)" x="0" y="0">34</text><text transform="translate(81.9,183.3) rotate(-90)" x="0" y="0">36</text><text transform="translate(81.9,163.3) rotate(-90)" x="0" y="0">38</text></g>
<path d="M85,438 L85,449 L91.5,443.5 Z" fill="#000"/>
</g>
</svg>
<div id="canvas" class="a">
<svg style="left:0;top:0" width="1043" height="577" viewBox="95 155 1043 577">
<defs><pattern id="dots" patternUnits="userSpaceOnUse" x="116" y="543" width="10" height="10"><rect x="0" y="0" width="1" height="1" fill="#424242"/></pattern><pattern id="dots2" patternUnits="userSpaceOnUse" x="117" y="543" width="10" height="10"><rect x="0" y="0" width="1" height="1" fill="#424242"/></pattern></defs>
<path d="M116.5,155 V732 M216.5,155 V732 M316.5,155 V732 M416.5,155 V732 M516.5,155 V732 M616.5,155 V732 M716.5,155 V732 M816.5,155 V732 M916.5,155 V732 M1016.5,155 V732 M1116.5,155 V732 M95,243.5 H1138 M95,343.5 H1138 M95,443.5 H1138 M95,543.5 H1138 M95,643.5 H1138" stroke="#232323" stroke-width="1"/>
<rect x="95" y="155" width="947" height="577" fill="url(#dots)"/><rect x="1042" y="155" width="96" height="577" fill="url(#dots2)"/>
<path d="M96,543.5 H136.5 M116.5,523 V564" stroke="#b00000" stroke-width="1"/>
<rect x="216.4" y="363.4" width="800" height="180" fill="none" stroke="#fff" stroke-width="2.7"/>
<line x1="195" y1="443.5" x2="1037" y2="443.5" stroke="#a85050" stroke-width="1.1" stroke-dasharray="17.5 7.5 1.5 6.5"/>
<line x1="316.5" y1="343" x2="316.5" y2="563" stroke="#ff1a1a" stroke-width="1.5" stroke-dasharray="17.5 7.5 1.5 6.5" stroke-dashoffset="-19"/>
<line x1="916.5" y1="343" x2="916.5" y2="563" stroke="#ff1a1a" stroke-width="1.5" stroke-dasharray="17.5 7.5 1.5 6.5" stroke-dashoffset="-19"/>
<circle cx="316.5" cy="443.5" r="40" fill="none" stroke="#c85858" stroke-width="2.2"/>
<circle cx="916.5" cy="443.5" r="40" fill="none" stroke="#c85858" stroke-width="2.2"/>
<text transform="translate(426.6,535.3) rotate(-90)" font-family="Liberation Sans" font-size="29.2" fill="#fff" textLength="182.5" lengthAdjust="spacingAndGlyphs">104.245.02.4B</text>
<circle cx="916.5" cy="323.5" r="4.8" fill="none" stroke="#a00000" stroke-width="1"/><path d="M911.5,323.5 h10 M916.5,318.5 v10" stroke="#a00000" stroke-width="1"/>
<rect x="311.5" y="398.5" width="10.5" height="10.5" fill="#0a7eb0" stroke="#808890" stroke-width="0.8"/>
<rect x="311.5" y="478.5" width="10.5" height="10.5" fill="#0a7eb0" stroke="#808890" stroke-width="0.8"/>
<rect x="271.5" y="438.5" width="10.5" height="10.5" fill="#0a7eb0" stroke="#808890" stroke-width="0.8"/>
<rect x="351.5" y="438.5" width="10.5" height="10.5" fill="#0a7eb0" stroke="#808890" stroke-width="0.8"/>
<circle cx="316.5" cy="443.5" r="5" fill="#0000b0" stroke="#6070a0" stroke-width="0.6"/>
<rect x="911.5" y="398.5" width="10.5" height="10.5" fill="#0a7eb0" stroke="#808890" stroke-width="0.8"/>
<rect x="911.5" y="478.5" width="10.5" height="10.5" fill="#0a7eb0" stroke="#808890" stroke-width="0.8"/>
<rect x="871.5" y="438.5" width="10.5" height="10.5" fill="#0a7eb0" stroke="#808890" stroke-width="0.8"/>
<rect x="951.5" y="438.5" width="10.5" height="10.5" fill="#0a7eb0" stroke="#808890" stroke-width="0.8"/>
<circle cx="916.5" cy="443.5" r="5" fill="#0000b0" stroke="#6070a0" stroke-width="0.6"/>
<defs><linearGradient id="bg1" x1="0" y1="0" x2="1" y2="0"><stop offset="0" stop-color="#3434e0"/><stop offset="1" stop-color="#0606b0"/></linearGradient><radialGradient id="ring" cx="50%" cy="50%" r="50%"><stop offset="0.70" stop-color="#8aa0b8" stop-opacity="0"/><stop offset="0.74" stop-color="#7a8a9a" stop-opacity="0.75"/><stop offset="0.84" stop-color="#3a4854" stop-opacity="0.8"/><stop offset="0.93" stop-color="#7a8c9c" stop-opacity="0.8"/><stop offset="0.97" stop-color="#5a6a7a" stop-opacity="0.6"/><stop offset="1" stop-color="#5a6a7a" stop-opacity="0"/></radialGradient></defs>
<rect x="1031.5" y="438.5" width="10.5" height="10.5" fill="#c80a2a" stroke="#808890" stroke-width="0.8"/>
<circle cx="228" cy="443.5" r="39.5" fill="url(#ring)"/>
<rect x="191" y="438.5" width="10.5" height="10.5" fill="url(#bg1)" stroke="#6a6aa0" stroke-width="0.8"/>
<path d="M228.2,443.5 L228.2,466.5 L233.3,461.3 L237.6,471.2 L240.6,469.9 L236.4,460 L243.3,460 Z" fill="#fff" stroke="#e8e8e8" stroke-width="3" stroke-linejoin="round"/>
<path d="M228.2,443.5 L228.2,466.5 L233.3,461.3 L237.6,471.2 L240.6,469.9 L236.4,460 L243.3,460 Z" fill="#fff" stroke="#111" stroke-width="1" stroke-linejoin="miter"/>
</svg></div>
<div id="vscroll" class="a"></div><div id="hscroll" class="a"></div>
<div class="a" style="left:71px;top:732px;width:24px;height:16px;background:#ececec"></div>
<div class="a" style="left:1142.5px;top:276px;width:8px;height:322px;border-radius:4px;background:#7f7f7f"></div>
<div class="a" style="left:280px;top:737px;width:634px;height:8px;border-radius:4px;background:#7f7f7f"></div>
<div class="a" style="left:1100px;top:732px;width:54px;height:16px;background:#ececec;font-size:12.6px;line-height:18px;text-align:right;color:#111;padding-right:1px">1 &lt; 10</div>
<div class="a" style="left:1154px;top:107px;width:1px;height:691px;background:#b8b8b8"></div>
<div class="a" style="left:71px;top:748px;width:1084px;height:2px;background:#cfcfcf"></div>
<div class="a" style="left:72px;top:750px;width:1082px;height:20px;background:#fff"></div>
<div class="a" style="left:71px;top:770px;width:1084px;height:1px;background:#c6c6c6"></div>
<div class="a" style="left:77px;top:750px;font-size:13.5px;line-height:16px;color:#1010d8;white-space:pre"><i>Comando:</i> snapgrid</div>
<div class="a" style="left:71px;top:771px;width:1084px;height:27px;background:#ececec"></div>
<div class="a" style="left:73px;top:777px;font-size:13.1px;line-height:16px;color:#111">Comando:</div>
<div class="a" style="left:138px;top:776px;width:987px;height:19px;background:#fff"></div>
<div class="a" style="left:1127px;top:772px;width:27px;height:26px;background:#f2f2f2;border:1px solid #c4c4c4"></div>
<svg class="a" style="left:1133px;top:780px" width="15" height="11" viewBox="0 0 15 11"><rect x="0.6" y="0.8" width="13.8" height="9.4" fill="#fff" stroke="#111" stroke-width="1.1"/><rect x="0.5" y="0.5" width="14" height="2.6" fill="#111"/><rect x="12.3" y="1.1" width="1" height="1" fill="#fff"/></svg>
<div id="status" class="a"></div>
<div class="a" style="left:0;top:798px;width:1500px;height:1px;background:#cfcfcf"></div>
<div class="a" style="left:2px;top:807px;font-size:9.6px;letter-spacing:0.25px;line-height:12px;color:#111;white-space:pre">11.173,9.95</div>
<div class="a" style="left:2px;top:827.5px;font-size:9.6px;letter-spacing:0.25px;line-height:12px;color:#111;white-space:pre">@-68.827,-12.05</div>
<div class="a" style="left:253px;top:802px;width:1px;height:40px;background:#8a8a8a"></div>
<div class="a" style="left:256px;top:807px;font-size:9.6px;letter-spacing:0.25px;line-height:12px;color:#111;white-space:pre">14.9613&lt;42°</div>
<div class="a" style="left:256px;top:827.5px;font-size:9.6px;letter-spacing:0.25px;line-height:12px;color:#111;white-space:pre">@69.8738&lt;190°</div>
<div class="a" style="left:499px;top:810px;width:200px;text-align:right;font-size:9.6px;letter-spacing:0.25px;line-height:12px;color:#111;white-space:pre">Seleccionar entidad o región</div>
<div class="a" style="left:499px;top:822px;width:200px;text-align:right;font-size:9.6px;letter-spacing:0.25px;line-height:12px;color:#111;white-space:pre">Mover entidad o referencia</div>
<div class="a" style="left:949px;top:810px;font-size:9.6px;letter-spacing:0.25px;line-height:12px;color:#111;white-space:pre">Las entidades seleccionadas:</div>
<div class="a" style="left:949px;top:822px;font-size:9.6px;letter-spacing:0.25px;line-height:12px;color:#111;white-space:pre">3 entidades en 2 capas.</div>
<div class="a" style="left:506.5px;top:819.5px;width:5px;height:5px;border-radius:50%;background:#c4c4c4"></div>
<div class="a" style="left:940.5px;top:819.5px;width:5px;height:5px;border-radius:50%;background:#c4c4c4"></div>
<div class="a" style="left:1270.0px;top:819.5px;width:5px;height:5px;border-radius:50%;background:#c4c4c4"></div>
<svg class="a" style="left:705px;top:800px" width="40" height="40" viewBox="705 800 40 40"><path d="M717.5,819 V813.5 Q717.5,806.2 726,806.2 Q734.6,806.2 734.6,813.5 V828 Q734.6,835.6 726,835.6 Q717.5,835.6 717.5,828 Z" fill="#fff" stroke="#4a4a4a" stroke-width="0.9"/><path d="M717.5,819.6 Q726,817.6 734.6,819.6" fill="none" stroke="#3a3a3a" stroke-width="1.4"/><path d="M726.1,806.4 V818.5" stroke="#3a3a3a" stroke-width="1"/><rect x="724.3" y="808" width="3.7" height="7.6" rx="1.4" fill="#fff" stroke="#3a3a3a" stroke-width="0.9"/></svg>
<div class="a" style="left:1155px;top:107px;width:300px;height:691px;background:#fff"></div>
<div class="a" style="left:1155px;top:107px;width:299px;height:23px;background:linear-gradient(#ececec,#dcdcdc)"></div>
<div class="a" style="left:1155px;top:112px;width:334px;text-align:center;font-size:12px;line-height:14px;color:#262626">Lista de capas</div>
<svg class="a" style="left:1155px;top:107px" width="300" height="160" viewBox="1155 107 300 160">
<defs><linearGradient id="dbtn" x1="0" y1="0" x2="0" y2="1"><stop offset="0" stop-color="#f8f8f8"/><stop offset="1" stop-color="#e8e8e8"/></linearGradient></defs>
<circle cx="1164" cy="118" r="7" fill="#6c6c6c"/><path d="M1161,115 L1167,121 M1167,115 L1161,121" stroke="#fff" stroke-width="1.8"/>
<circle cx="1182" cy="118" r="7" fill="#6c6c6c"/><rect x="1178.5" y="117" width="5" height="4" fill="none" stroke="#fff" stroke-width="1"/><path d="M1180.5,117 V115 H1185.5 V119 H1183.5" fill="none" stroke="#fff" stroke-width="1"/>
<rect x="1156.0" y="130.5" width="59" height="25" fill="url(#dbtn)" stroke="#b0b0b0" stroke-width="1.3"/>
<rect x="1216.0" y="130.5" width="59" height="25" fill="url(#dbtn)" stroke="#b0b0b0" stroke-width="1.3"/>
<rect x="1276.0" y="130.5" width="59" height="25" fill="url(#dbtn)" stroke="#b0b0b0" stroke-width="1.3"/>
<rect x="1336.0" y="130.5" width="59" height="25" fill="url(#dbtn)" stroke="#b0b0b0" stroke-width="1.3"/>
<rect x="1396.0" y="130.5" width="59" height="25" fill="url(#dbtn)" stroke="#b0b0b0" stroke-width="1.3"/>
<rect x="1155" y="155.5" width="299" height="1.8" fill="#b8b8b8"/>
<path d="M1178.1,143 Q1181.0,137.2 1185.5,137.4 Q1190.5,137.6 1192.9,142.4 Q1190.0,148.6 1185.5,148.4 Q1180.5,148.2 1178.1,143 Z" fill="#000"/><ellipse cx="1185.5" cy="143.9" rx="4.6" ry="3.3" fill="#fff"/><circle cx="1185.5" cy="142.8" r="2.9" fill="#000"/><circle cx="1184.8" cy="142" r="0.6" fill="#fff"/>
<path d="M1238.1,143 Q1241.0,137.2 1245.5,137.4 Q1250.5,137.6 1252.9,142.4 Q1250.0,148.6 1245.5,148.4 Q1240.5,148.2 1238.1,143 Z" fill="#a8a8a8"/><ellipse cx="1245.5" cy="143.9" rx="4.6" ry="3.3" fill="#fff"/><circle cx="1245.5" cy="142.8" r="2.9" fill="#a8a8a8"/><circle cx="1244.8" cy="142" r="0.6" fill="#fff"/>
<path d="M1299,143.5 H1312 M1305.5,137 V150" stroke="#e00000" stroke-width="2.6"/>
<path d="M1359,143.5 H1371" stroke="#e00000" stroke-width="2.6"/>
<path d="M1418,150 L1419.2,146.5 L1429.5,136.5 L1431.8,138.8 L1421.5,148.8 Z" fill="#e8b040" stroke="#8a6020" stroke-width="0.7"/><path d="M1428.2,137.8 L1429.5,136.5 L1431.8,138.8 L1430.5,140.1 Z" fill="#e02030"/>
<rect x="1161" y="163.2" width="15.5" height="8.2" fill="#fff" stroke="#000" stroke-width="1"/>
<path d="M1415.6,166.3 Q1418.5,160.5 1423,160.70000000000002 Q1428,160.9 1430.4,165.70000000000002 Q1427.5,171.9 1423,171.70000000000002 Q1418,171.5 1415.6,166.3 Z" fill="#000"/><ellipse cx="1423" cy="167.20000000000002" rx="4.6" ry="3.3" fill="#fff"/><circle cx="1423" cy="166.10000000000002" r="2.9" fill="#000"/><circle cx="1422.3" cy="165.3" r="0.6" fill="#fff"/>
<path d="M1441.5,167 V164 A3.5,3.5 0 0 1 1448.5,164 V167" fill="none" stroke="#bcbcbc" stroke-width="1.5"/><rect x="1440" y="166.5" width="10" height="7.5" rx="0.8" fill="#bcbcbc"/>
<rect x="1161" y="183.2" width="15.5" height="8.2" fill="#f00000" stroke="#000" stroke-width="1"/>
<path d="M1415.6,186.3 Q1418.5,180.5 1423,180.70000000000002 Q1428,180.9 1430.4,185.70000000000002 Q1427.5,191.9 1423,191.70000000000002 Q1418,191.5 1415.6,186.3 Z" fill="#000"/><ellipse cx="1423" cy="187.20000000000002" rx="4.6" ry="3.3" fill="#fff"/><circle cx="1423" cy="186.10000000000002" r="2.9" fill="#000"/><circle cx="1422.3" cy="185.3" r="0.6" fill="#fff"/>
<path d="M1441.5,187 V184 A3.5,3.5 0 0 1 1448.5,184 V187" fill="none" stroke="#bcbcbc" stroke-width="1.5"/><rect x="1440" y="186.5" width="10" height="7.5" rx="0.8" fill="#bcbcbc"/>
<rect x="1161" y="203.2" width="15.5" height="8.2" fill="#000" stroke="#000" stroke-width="1"/>
<path d="M1415.6,206.3 Q1418.5,200.5 1423,200.70000000000002 Q1428,200.9 1430.4,205.70000000000002 Q1427.5,211.9 1423,211.70000000000002 Q1418,211.5 1415.6,206.3 Z" fill="#000"/><ellipse cx="1423" cy="207.20000000000002" rx="4.6" ry="3.3" fill="#fff"/><circle cx="1423" cy="206.10000000000002" r="2.9" fill="#000"/><circle cx="1422.3" cy="205.3" r="0.6" fill="#fff"/>
<path d="M1441.5,207 V204 A3.5,3.5 0 0 1 1448.5,204 V207" fill="none" stroke="#bcbcbc" stroke-width="1.5"/><rect x="1440" y="206.5" width="10" height="7.5" rx="0.8" fill="#bcbcbc"/>
<rect x="1161" y="223.2" width="15.5" height="8.2" fill="#fff" stroke="#000" stroke-width="1"/>
<path d="M1415.6,226.3 Q1418.5,220.5 1423,220.70000000000002 Q1428,220.9 1430.4,225.70000000000002 Q1427.5,231.9 1423,231.70000000000002 Q1418,231.5 1415.6,226.3 Z" fill="#000"/><ellipse cx="1423" cy="227.20000000000002" rx="4.6" ry="3.3" fill="#fff"/><circle cx="1423" cy="226.10000000000002" r="2.9" fill="#000"/><circle cx="1422.3" cy="225.3" r="0.6" fill="#fff"/>
<path d="M1441.5,227 V224 A3.5,3.5 0 0 1 1448.5,224 V227" fill="none" stroke="#bcbcbc" stroke-width="1.5"/><rect x="1440" y="226.5" width="10" height="7.5" rx="0.8" fill="#bcbcbc"/>
<path d="M1394.6,233 L1395.8,229.5 L1406.1,219.5 L1408.3999999999999,221.8 L1398.1,231.8 Z" fill="#e8b040" stroke="#8a6020" stroke-width="0.7"/><path d="M1404.8,220.8 L1406.1,219.5 L1408.3999999999999,221.8 L1407.1,223.1 Z" fill="#e02030"/>
</svg>
<div class="a" style="left:1183px;top:159px;font-size:13px;line-height:16px;color:#111">0</div>
<div class="a" style="left:1183px;top:179px;font-size:13px;line-height:16px;color:#111">Center</div>
<div class="a" style="left:1183px;top:199px;font-size:13px;line-height:16px;color:#111">Hidden</div>
<div class="a" style="left:1183px;top:219px;font-size:13px;line-height:16px;color:#111">Visible</div>
<div class="a" style="left:1454px;top:107px;width:1px;height:691px;background:#c4c4c4"></div>
<div id="rtb" class="a"></div>
<svg class="a" style="left:1455px;top:107px" width="45" height="400" viewBox="1455 107 45 400">
<rect x="1462" y="116" width="2" height="2" fill="#a8a8a8"/>
<rect x="1468" y="116" width="2" height="2" fill="#a8a8a8"/>
<rect x="1474" y="116" width="2" height="2" fill="#a8a8a8"/>
<rect x="1480" y="116" width="2" height="2" fill="#a8a8a8"/>
<rect x="1486" y="116" width="2" height="2" fill="#a8a8a8"/>
<rect x="1456.5" y="120.5" width="42" height="41.5" rx="4" fill="#b4b4b4"/>
<rect x="1456.5" y="417.3" width="42" height="42" rx="4" fill="#b4b4b4"/>
<line x1="1458" y1="261.5" x2="1499" y2="261.5" stroke="#777" stroke-width="1" stroke-dasharray="1 2"/>
<line x1="1458" y1="409.5" x2="1499" y2="409.5" stroke="#777" stroke-width="1" stroke-dasharray="1 2"/>
<rect x="1463.9" y="128.0" width="26.8" height="26.8" fill="#fff" stroke="#222" stroke-width="0.95"/><rect x="1463.4" y="127.5" width="27.8" height="4.3" fill="#000"/><rect x="1464.6" y="128.5" width="2.4" height="2.4" fill="#fff"/>
<rect x="1463.9" y="175.3" width="26.8" height="26.8" fill="#fff" stroke="#222" stroke-width="0.95"/><rect x="1463.4" y="174.8" width="27.8" height="4.3" fill="#000"/><rect x="1464.6" y="175.8" width="2.4" height="2.4" fill="#fff"/>
<rect x="1463.9" y="221.1" width="26.8" height="26.8" fill="#fff" stroke="#222" stroke-width="0.95"/><rect x="1463.4" y="220.6" width="27.8" height="4.3" fill="#000"/><rect x="1464.6" y="221.6" width="2.4" height="2.4" fill="#fff"/>
<rect x="1463.9" y="276.7" width="26.8" height="26.8" fill="#fff" stroke="#222" stroke-width="0.95"/><rect x="1463.4" y="276.2" width="27.8" height="4.3" fill="#000"/><rect x="1464.6" y="277.2" width="2.4" height="2.4" fill="#fff"/>
<rect x="1463.9" y="322.7" width="26.8" height="26.8" fill="#fff" stroke="#222" stroke-width="0.95"/><rect x="1463.4" y="322.2" width="27.8" height="4.3" fill="#000"/><rect x="1464.6" y="323.2" width="2.4" height="2.4" fill="#fff"/>
<rect x="1463.9" y="368.7" width="26.8" height="26.8" fill="#fff" stroke="#222" stroke-width="0.95"/><rect x="1463.4" y="368.2" width="27.8" height="4.3" fill="#000"/><rect x="1464.6" y="369.2" width="2.4" height="2.4" fill="#fff"/>
<rect x="1463.9" y="424.7" width="26.8" height="26.8" fill="#fff" stroke="#222" stroke-width="0.95"/><rect x="1463.4" y="424.2" width="27.8" height="4.3" fill="#000"/><rect x="1464.6" y="425.2" width="2.4" height="2.4" fill="#fff"/>
<rect x="1463.9" y="471.7" width="26.8" height="26.8" fill="#fff" stroke="#222" stroke-width="0.95"/><rect x="1463.4" y="471.2" width="27.8" height="4.3" fill="#000"/><rect x="1464.6" y="472.2" width="2.4" height="2.4" fill="#fff"/>
<path d="M1471,139.5 L1476,137.5 L1476,148.5 L1471,150.5 Z" fill="#8a8a8a" stroke="#333" stroke-width="0.6"/>
<path d="M1475,138.0 L1484,135.0 L1484,146.5 L1475,149.5 Z" fill="#fff" stroke="#555" stroke-width="0.7"/>
<path d="M1477,146.5 L1481,139.5 L1482,145.5 Z" fill="none" stroke="#e03030" stroke-width="0.8"/>
<rect x="1470.5" y="183.8" width="10" height="7.5" fill="#fbf0c8" stroke="#555" stroke-width="0.7"/><circle cx="1479.5" cy="190.3" r="4.3" fill="#fbf0c8" fill-opacity="0.85" stroke="#555" stroke-width="0.7"/>
<rect x="1468.5" y="230.6" width="17" height="11" rx="2.5" fill="#f4f4f4" stroke="#b8c8e0" stroke-width="0.8"/>
<rect x="1468" y="285.2" width="3.5" height="3" fill="#111"/><rect x="1474" y="285.2" width="12.5" height="3" fill="#fff" stroke="#333" stroke-width="0.7"/>
<rect x="1468" y="290.7" width="3.5" height="3" fill="#111"/><rect x="1474" y="290.7" width="12.5" height="3" fill="#fff" stroke="#333" stroke-width="0.7"/>
<rect x="1468" y="296.2" width="3.5" height="3" fill="#111"/><rect x="1474" y="296.2" width="12.5" height="3" fill="#fff" stroke="#333" stroke-width="0.7"/>
<ellipse cx="1476.9" cy="331.8" rx="6.8" ry="1.6" fill="#6a6a6a"/>
<path d="M1470.3,332.0 L1483.5,332.0 L1478.6,338.7 L1478.6,344.9 L1476,343.5 L1475.2,338.7 Z" fill="#c4c4c4" stroke="#6a6a6a" stroke-width="0.6"/>
<path d="M1469.5,377.2 L1474.3,380.5 L1474.3,388.5 L1469.5,391.5 Z" fill="#f0f0f0" stroke="#444" stroke-width="0.8"/><rect x="1474" y="380.4" width="3.6" height="8.2" fill="#fff" stroke="#666" stroke-width="0.4"/><rect x="1477.6" y="380.4" width="8.8" height="8.2" rx="1.5" fill="#8c8c8c" stroke="#555" stroke-width="0.5"/><path d="M1467,384.5 H1488" stroke="#f08080" stroke-width="0.9" stroke-dasharray="1.5 1"/>
<line x1="1467" y1="432.2" x2="1478" y2="432.2" stroke="#888" stroke-width="0.9"/>
<line x1="1467" y1="435.4" x2="1480" y2="435.4" stroke="#888" stroke-width="0.9"/>
<line x1="1467" y1="438.59999999999997" x2="1478" y2="438.59999999999997" stroke="#888" stroke-width="0.9"/>
<line x1="1467" y1="441.8" x2="1480" y2="441.8" stroke="#888" stroke-width="0.9"/>
<line x1="1464" y1="446.7" x2="1490" y2="446.7" stroke="#333" stroke-width="0.6"/><line x1="1470" y1="449.2" x2="1488" y2="449.2" stroke="#444" stroke-width="1"/>
<rect x="1470.3" y="480.7" width="13.4" height="14.5" rx="1" fill="#c8862a" stroke="#9a6418" stroke-width="0.5"/><rect x="1471.6" y="482.2" width="10.8" height="11.8" fill="#ececec"/><path d="M1479.5,494.0 L1482.4,491.2 L1482.4,494.0 Z" fill="#9a9a9a"/><rect x="1474.3" y="479.2" width="5.4" height="3.2" rx="0.8" fill="#8a8a84"/>
<line x1="1473.3" y1="485.2" x2="1480.5" y2="485.2" stroke="#c4c4c4" stroke-width="0.7"/>
<line x1="1473.3" y1="487.59999999999997" x2="1480.5" y2="487.59999999999997" stroke="#c4c4c4" stroke-width="0.7"/>
<line x1="1473.3" y1="490.0" x2="1480.5" y2="490.0" stroke="#c4c4c4" stroke-width="0.7"/>
</svg>
</body></html>
